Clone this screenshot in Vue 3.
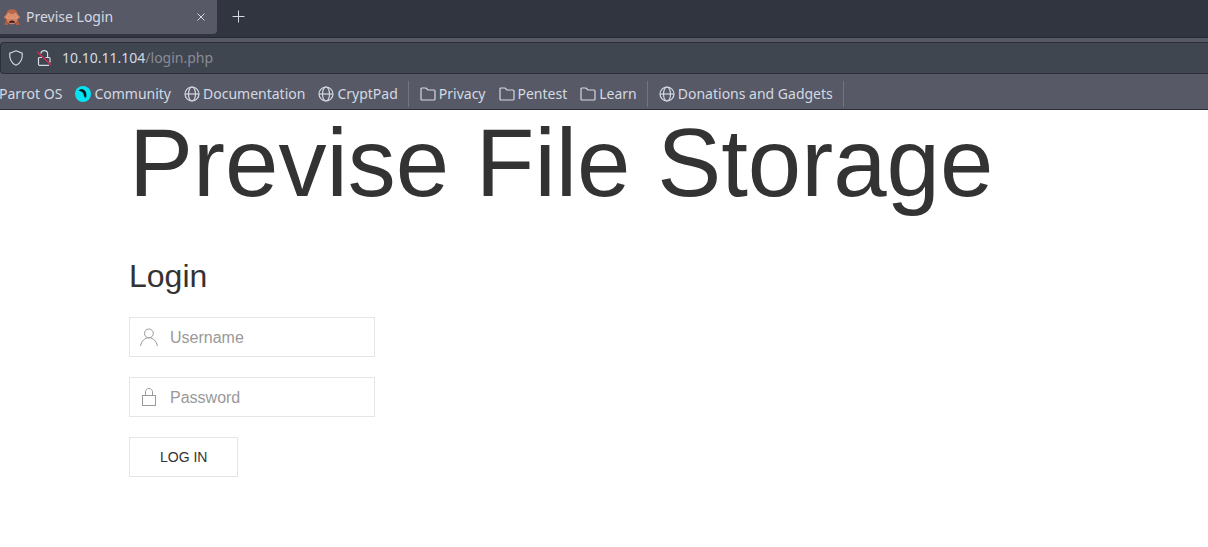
<script setup>
import { ref } from 'vue'

const username = ref('')
const password = ref('')
const groups = [
  [
    { label: 'Parrot OS', icon: '' },
    { label: 'Community', icon: 'parrot' },
    { label: 'Documentation', icon: 'globe' },
    { label: 'CryptPad', icon: 'globe' },
  ],
  [
    { label: 'Privacy', icon: 'folder' },
    { label: 'Pentest', icon: 'folder' },
    { label: 'Learn', icon: 'folder' },
  ],
  [{ label: 'Donations and Gadgets', icon: 'globe' }],
]
</script>

<template>
  <div class="browser">
    <div class="tabs">
      <div class="tab">
        <svg class="icon" viewBox="0 0 16 16" aria-hidden="true">
          <path d="M2 7C2 2.500 4.500.5 8 .2 11.500.5 14 2.500 14 7v6H2z" fill="#bd6547" />
          <circle cx="1.600" cy="8" r="1.500" fill="#d08262" />
          <circle cx="14.400" cy="8" r="1.500" fill="#d08262" />
          <ellipse cx="8" cy="11" rx="5.200" ry="4.300" fill="#cf8060" />
          <path d="M1.800 6.500 4.500 3.500 8 5.500l3.500-2 2.700 3-.8 3.700L8 9.800l-5.400.4z" fill="#dd9473" />
          <path d="m4.500 4.500 3 3M11.500 4.500l-3 3M3.200 6.500l2.300 2M12.800 6.500l-2.300 2" stroke="#c47656" stroke-width=".6" />
          <path d="M5 13.800C5 10.800 11 10.800 11 13.800z" fill="#3b1a20" />
          <path d="M.5 16 1 13l1.800-1.500L4 14v2zM15.500 16l-.5-3-1.800-1.500L12 14v2z" fill="#b65b3d" />
        </svg>
        <span class="tab-title">Previse Login</span>
        <button class="plain close" type="button" aria-label="Close tab">
          <svg viewBox="0 0 10 10"><path d="m1.500 1.500 7 7m0-7-7 7" /></svg>
        </button>
      </div>
      <button class="plain new" type="button" aria-label="New tab">
        <svg viewBox="0 0 13 13"><path d="M6.500 .5v12M.5 6.500h12" /></svg>
      </button>
    </div>

    <div class="toolbar">
      <div class="address">
        <svg class="icon line" viewBox="0 0 16 16" aria-hidden="true">
          <path d="M8 .8 14.200 3.200c.5 4.600-1.200 10-6.200 12.100C3 13.200 1.300 7.800 1.800 3.200z" />
        </svg>
        <svg class="icon line lock" viewBox="0 0 16 16" aria-hidden="true">
          <path d="M6 7.500H3.500a1 1 0 0 0-1 1v5.800a1 1 0 0 0 1 1h9.500M9.500 7.500h3.500a1 1 0 0 1 1 1v4" />
          <path d="M4.800 3.500C5.300 1.700 6.500.7 8.200.7c2 0 3.400 1.500 3.400 3.400v3.400" />
          <path class="slash" d="m1.500 2 13.500 13" />
        </svg>
        <span class="url"><b>10.10.11.104</b>/login.php</span>
      </div>
    </div>

    <nav class="bookmarks" aria-label="Bookmarks">
      <div v-for="(group, i) in groups" :key="i" class="group">
        <a v-for="item in group" :key="item.label" href="#">
          <svg v-if="item.icon === 'globe'" class="icon line" viewBox="0 0 16 16" aria-hidden="true">
            <circle cx="8" cy="8" r="7" />
            <ellipse cx="8" cy="8" rx="3.500" ry="7" />
            <path d="M1 8h14" />
          </svg>
          <svg v-else-if="item.icon === 'folder'" class="icon line" viewBox="0 0 16 16" aria-hidden="true">
            <path d="M1 3a1 1 0 0 1 1-1h4l2 2h6a1 1 0 0 1 1 1v8a1 1 0 0 1-1 1H2a1 1 0 0 1-1-1z" />
          </svg>
          <svg v-else-if="item.icon === 'parrot'" class="icon" viewBox="0 0 16 16" aria-hidden="true">
            <circle cx="8" cy="8" r="8" fill="#04e4f4" />
            <path d="M3.500 4.500C5 3 8 2.800 9.800 4.500c1.700 1.800 2 4.500 1.200 8L9.900 10.200l-.6 1.300L8.600 8 7.200 6 5.500 5.300z" fill="#06191c" />
          </svg>
          <span>{{ item.label }}</span>
        </a>
      </div>
    </nav>
  </div>

  <main class="page">
    <h1>Previse File Storage</h1>
    <form @submit.prevent>
      <h2>Login</h2>
      <label class="field">
        <svg viewBox="0 0 20 20" aria-hidden="true">
          <circle cx="9.900" cy="6.400" r="4.400" />
          <path d="M1.500 19c.8-4.800 4.300-8.300 8.400-8.300s7.700 3.500 8.500 8.300" />
        </svg>
        <input v-model="username" type="text" placeholder="Username" aria-label="Username" />
      </label>
      <label class="field">
        <svg viewBox="0 0 20 20" aria-hidden="true">
          <rect x="3.500" y="8.500" width="13" height="10" />
          <path d="M6.500 8V4.900C6.500 3.100 8 1.500 10 1.500s3.500 1.600 3.500 3.400V8" />
        </svg>
        <input v-model="password" type="password" placeholder="Password" aria-label="Password" />
      </label>
      <button class="submit" type="submit">LOG IN</button>
    </form>
  </main>
</template>

<style>
body {
  margin: 0;
  background: #fff;
}
</style>

<style scoped>
.browser {
  background: #585966;
  color: #d3dae3;
  font: 14px/20px "Noto Sans", sans-serif;
  border-bottom: 1px solid #2b2c3a;
  overflow: hidden;
}
.icon {
  width: 16px;
  height: 16px;
  flex: none;
}
.line {
  fill: none;
  stroke: #d3dae3;
  stroke-width: 1.2;
}
.plain {
  display: flex;
  padding: 0;
  border: 0;
  background: none;
}
.plain svg {
  fill: none;
  stroke: #d3dae3;
}
.tabs {
  display: flex;
  height: 37px;
  background: #31353f;
  border-bottom: 1px solid #262833;
}
.tab {
  display: flex;
  align-items: center;
  box-sizing: border-box;
  width: 217px;
  height: 34px;
  padding: 0 11px 0 4px;
  gap: 6px;
  background: #585966;
  border-radius: 0 0 4px 0;
}
.tab-title {
  flex: 1;
}
.close svg {
  width: 10px;
  height: 10px;
}
.new {
  align-self: flex-start;
  padding: 10px 15px;
}
.new svg {
  width: 13px;
  height: 13px;
}
.toolbar {
  padding-top: 4px;
}
.address {
  display: flex;
  align-items: center;
  box-sizing: border-box;
  height: 32px;
  padding-left: 7px;
  background: #404650;
  border: 1px solid #2b2e39;
  border-right: 0;
  border-radius: 4px 0 0 4px;
}
.lock {
  margin-left: 12px;
}
.slash {
  stroke: #e22850;
}
.url {
  margin-left: 10px;
  font-size: 14px;
  color: #898c96;
}
.url b {
  font-weight: 400;
  color: #d3dae3;
}
.bookmarks {
  display: flex;
  height: 35px;
  align-items: center;
  margin-left: -1px;
}
.group {
  display: flex;
  align-items: center;
  gap: 13px;
  height: 26px;
  margin-top: 4px;
  padding-right: 10px;
  margin-right: 11px;
  border-right: 1px solid #737580;
}
.group a {
  display: flex;
  align-items: center;
  gap: 3px;
  color: inherit;
  text-decoration: none;
  white-space: nowrap;
}
.page {
  max-width: 950px;
  margin: 0 auto;
  padding-top: 5px;
  color: #333;
  font-family: "Liberation Sans", Arial, sans-serif;
}
h1 {
  margin: 0 0 46px;
  font-size: 96px;
  line-height: 96px;
  font-weight: 400;
}
h2 {
  margin: 0 0 22px;
  font-size: 32px;
  line-height: 38px;
  font-weight: 400;
}
.field {
  display: flex;
  align-items: center;
  box-sizing: border-box;
  width: 246px;
  height: 40px;
  margin-bottom: 20px;
  padding-left: 9px;
  gap: 11px;
  border: 1px solid #e5e5e5;
}
.field svg {
  width: 20px;
  height: 20px;
  flex: none;
  fill: none;
  stroke: #999;
}
.field input {
  flex: 1;
  min-width: 0;
  padding: 2px 0 0;
  border: 0;
  outline: 0;
  background: none;
  color: #666;
  font: 16px/24px "Liberation Sans", Arial, sans-serif;
}
.field input::placeholder {
  color: #999;
}
.submit {
  display: block;
  height: 40px;
  padding: 0 30px;
  border: 1px solid #e5e5e5;
  background: transparent;
  color: #333;
  font: 14px/38px "Liberation Sans", Arial, sans-serif;
}
</style>
